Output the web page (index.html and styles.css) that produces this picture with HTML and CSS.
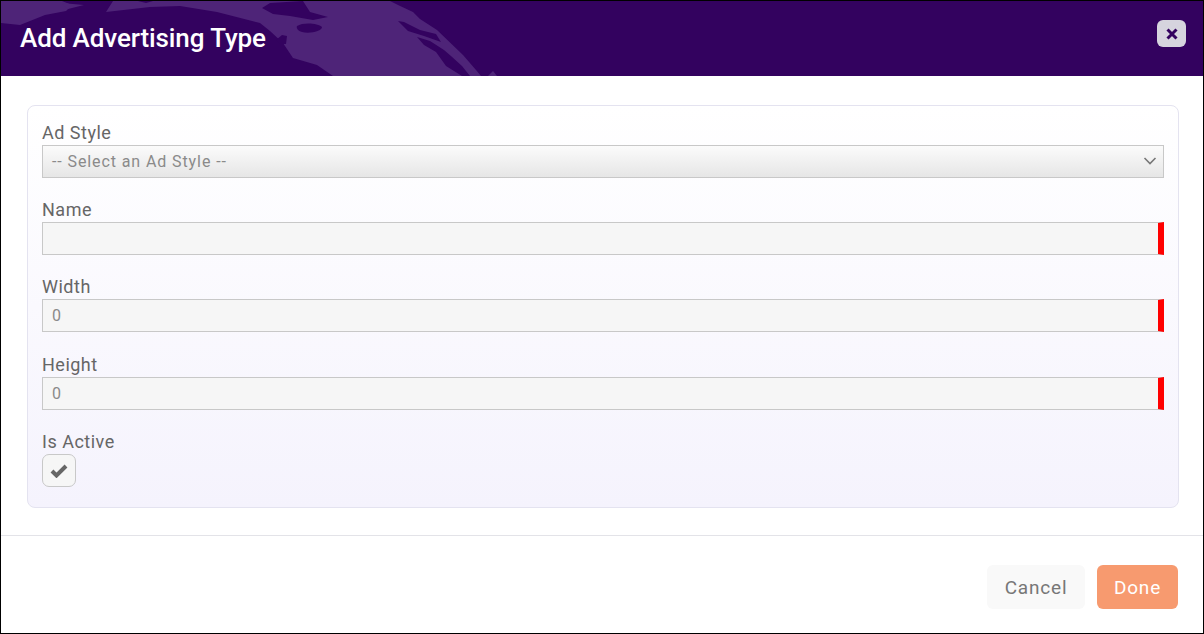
FILE: index.html
```html
<!DOCTYPE html>
<html lang="en">

<head>
    <meta charset="UTF-8">
    <meta name="viewport" content="width=device-width, initial-scale=1.0">
    <title>Add Advertising Type</title>
    <link rel="stylesheet" href="styles.css">
</head>

<body>
    <div class="modal">
        <div class="modal-header">
            <svg class="header-map" width="520" height="75" viewBox="0 1 520 75" aria-hidden="true">
                <path fill="#4e2478" d="M1 1H62L72 5L66 11L45 15L30 21L20 25L1 23Z" />
                <path fill="#4e2478" d="M62 3L84 5L68 9L64 6Z" />
                <path fill="#4e2478" d="M106 12L113 1H138L146 3L153 1H390L398 5L413 12L420 19L437 30L463 55L476 70L481 76H333L317 65L293 58L283 43L270 31L260 23L217 12L180 6L150 7Z" />
                <path fill="#4e2478" d="M488 76L493 71L497 76Z" />
                <path fill="#33025f" d="M262 8L270 3L303 1L310 12L328 17L313 20L290 16L273 14Z" />
                <path fill="#33025f" d="M297 26C303 22 318 23 322 27C322 31 310 34 302 32C298 31 296 28 297 26Z" />
                <path fill="#33025f" d="M282 35L287 36L286 44L280 44L276 40Z" />
                <path fill="#33025f" d="M398 21L404 22L420 30L436 34L441 42L424 36L408 31Z" />
                <path fill="#33025f" d="M417 37L430 41L444 50L451 56L462 66L470 76H462L446 66L436 52L424 45Z" />
            </svg>
            <h1 class="modal-title">Add Advertising Type</h1>
            <button class="close-btn" aria-label="Close">
                <svg width="14" height="14" viewBox="0 0 14 14">
                    <path d="M2.5 2.5L11.5 11.5M11.5 2.5L2.5 11.5" stroke="#33025f" stroke-width="3" />
                </svg>
            </button>
        </div>

        <div class="modal-body">
            <div class="form-panel">
                <div class="form-group">
                    <label>Ad Style</label>
                    <div class="select-box">
                        <span>-- Select an Ad Style --</span>
                        <svg width="14" height="8" viewBox="0 0 14 8">
                            <path d="M1.5 1L7 6.5L12.5 1" fill="none" stroke="#777" stroke-width="1.6" />
                        </svg>
                    </div>
                </div>
                <div class="form-group">
                    <label>Name</label>
                    <div class="text-input required"></div>
                </div>
                <div class="form-group">
                    <label>Width</label>
                    <div class="text-input required">0</div>
                </div>
                <div class="form-group">
                    <label>Height</label>
                    <div class="text-input required">0</div>
                </div>
                <div class="form-group">
                    <label>Is Active</label>
                    <div class="check-box">
                        <svg width="18" height="15" viewBox="0 0 18 15">
                            <path d="M2 8L6.5 12.5L16 3" fill="none" stroke="#666" stroke-width="4" />
                        </svg>
                    </div>
                </div>
            </div>
        </div>

        <div class="modal-footer">
            <button class="btn btn-cancel">Cancel</button>
            <button class="btn btn-done">Done</button>
        </div>
    </div>
</body>

</html>
```

FILE: styles.css
```css
* {
    margin: 0;
    padding: 0;
    box-sizing: border-box;
}

body {
    font-family: Roboto, Arial, sans-serif;
    background-color: #ffffff;
}

.modal {
    width: 1204px;
    height: 634px;
    border: 1px solid #000;
    display: flex;
    flex-direction: column;
    overflow: hidden;
}

.modal-header {
    position: relative;
    height: 75px;
    flex-shrink: 0;
    margin-right: -1px;
    padding-left: 19px;
    display: flex;
    align-items: center;
    background-color: #33025f;
}

.header-map {
    position: absolute;
    left: -1px;
    top: 0;
}

.modal-title {
    position: relative;
    top: -1px;
    font-size: 26px;
    font-weight: 500;
    letter-spacing: -0.1px;
    color: #fff;
}

.close-btn {
    position: absolute;
    top: 19px;
    right: 18px;
    width: 29px;
    height: 27px;
    border: none;
    border-radius: 6px;
    background-color: #d6d4de;
    display: flex;
    align-items: center;
    justify-content: center;
}

.modal-body {
    padding: 29px 24px 27px 26px;
    border-bottom: 1px solid #e3e3e8;
}

.form-panel {
    height: 403px;
    padding: 16.6px 14px 0;
    border: 1px solid #e4e3f0;
    border-radius: 8px;
    background: linear-gradient(#ffffff, #f5f3fd);
}

.form-group {
    margin-bottom: 22.33px;
}

.form-group label {
    display: block;
    height: 22px;
    font-size: 18px;
    line-height: 19px;
    letter-spacing: 0.5px;
    color: #666;
}

.select-box,
.text-input {
    height: 33px;
    border: 1px solid #c8c8c8;
    padding: 0 9px;
    font-size: 16px;
    line-height: 31px;
    letter-spacing: 0.9px;
    color: #8a8a8a;
}

.select-box {
    display: flex;
    align-items: center;
    justify-content: space-between;
    padding-right: 6px;
    background: linear-gradient(#fbfbfb, #e6e6e6);
}

.text-input {
    background-color: #f6f6f6;
}

.text-input.required {
    border-right: 6px solid #ff0000;
}

.check-box {
    width: 34px;
    height: 33px;
    border: 1px solid #c8c8c8;
    border-radius: 7px;
    background-color: #f6f6f6;
    display: flex;
    align-items: center;
    justify-content: center;
}

.modal-footer {
    display: flex;
    justify-content: flex-end;
    gap: 12px;
    padding: 29px 25px 0 0;
}

.btn {
    height: 44px;
    border: none;
    border-radius: 6px;
    font-family: Roboto, Arial, sans-serif;
    font-size: 19px;
    letter-spacing: 0.8px;
}

.btn-cancel {
    width: 98px;
    background-color: #f9f9f9;
    color: #777;
}

.btn-done {
    width: 81px;
    background-color: #f79a6f;
    color: #fff;
    font-weight: 400;
}
```
